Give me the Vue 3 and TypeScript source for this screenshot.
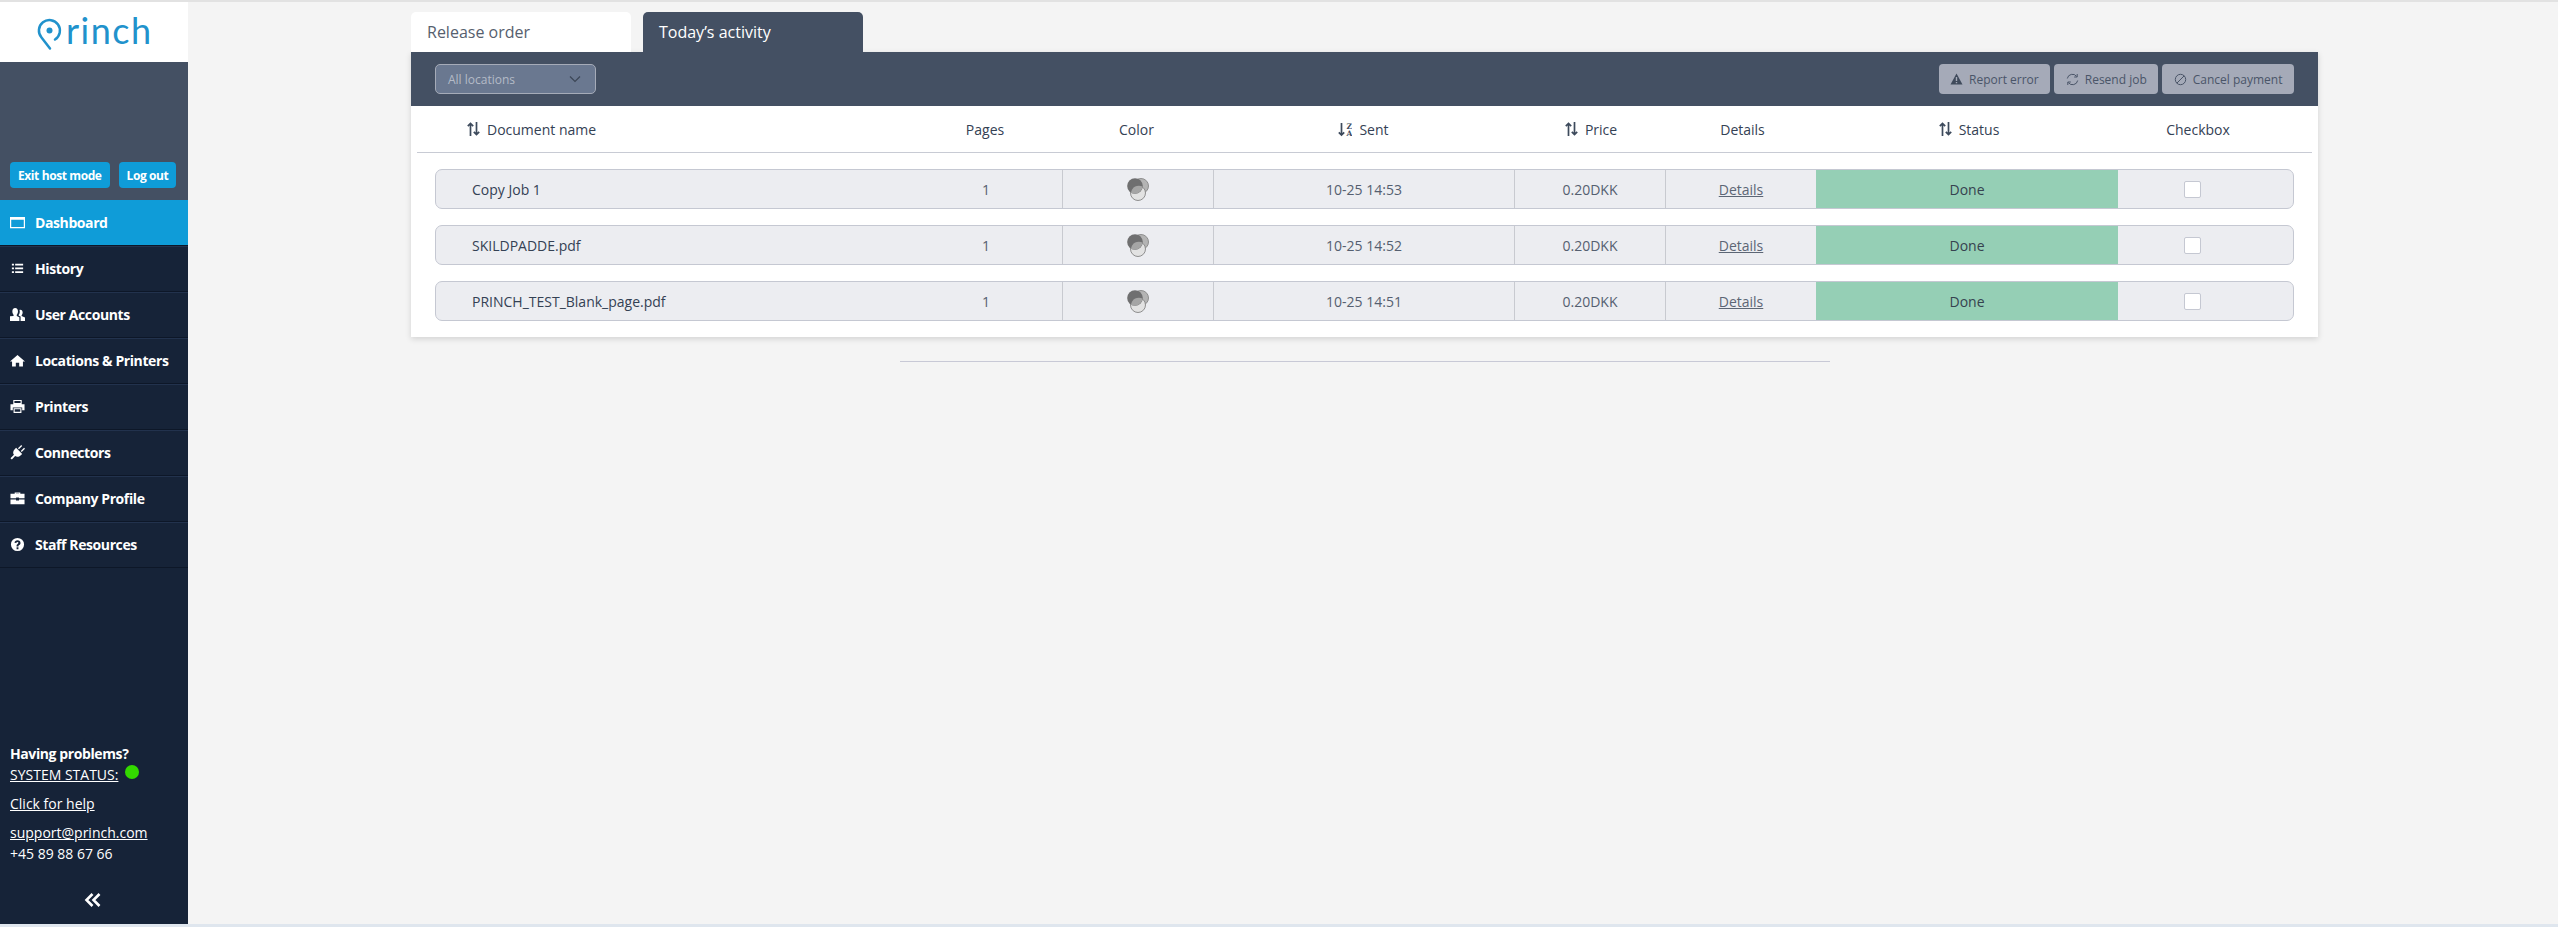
<template>
  <div class="page">
    <aside class="sidebar">
      <div class="logo">
        <svg class="logo-pin" width="26" height="36" viewBox="0 0 26 36">
          <path d="M14 31.500 L5.500 20.500 A10.500 10.500 0 1 1 19 22.500" fill="none" stroke="#2192cc" stroke-width="2.500" stroke-linecap="round" stroke-linejoin="round" />
          <circle cx="13.500" cy="13.500" r="3" fill="#2192cc" />
        </svg>
        <span class="logo-text">rinch</span>
      </div>
      <div class="user-panel">
        <button class="host-btn">Exit host mode</button>
        <button class="host-btn">Log out</button>
      </div>
      <nav class="nav">
        <a v-for="item in navItems" :key="item.label" class="nav-item" :class="{ active: item.active }">
          <svg class="nav-icon" width="15" height="15" viewBox="0 0 16 16" fill="#fff">
            <path :d="item.icon" fill-rule="evenodd" />
          </svg>
          <span>{{ item.label }}</span>
        </a>
      </nav>
      <div class="help">
        <div class="help-title">Having problems?</div>
        <div class="help-status"><a>SYSTEM STATUS:</a><i class="status-dot"></i></div>
        <div class="help-link"><a>Click for help</a></div>
        <div class="help-mail"><a>support@princh.com</a></div>
        <div>+45 89 88 67 66</div>
        <div class="collapse">
          <svg width="18" height="14" viewBox="0 0 18 14" fill="none" stroke="#fff" stroke-width="2.600">
            <path d="M8.500 1 L2.500 7 L8.500 13" />
            <path d="M15.500 1 L9.500 7 L15.500 13" />
          </svg>
        </div>
      </div>
    </aside>

    <main class="main">
      <div class="tabs">
        <div class="tab">Release order</div>
        <div class="tab current">Today’s activity</div>
      </div>
      <section class="card">
        <div class="toolbar">
          <div class="select">
            <span>All locations</span>
            <svg width="12" height="8" viewBox="0 0 12 8" fill="none" stroke="#3c4656" stroke-width="1.200">
              <path d="M1 1.500 L6 6.500 L11 1.500" />
            </svg>
          </div>
          <div class="actions">
            <button class="action">
              <svg width="13" height="12" viewBox="0 0 13 12"><path d="M6.500 0.500 L12.500 11.500 L0.500 11.500 Z M5.800 4 L5.800 8 L7.200 8 L7.200 4 Z M5.800 9 L5.800 10.300 L7.200 10.300 L7.200 9 Z" fill="#3f4a5b" fill-rule="evenodd" /></svg>
              Report error
            </button>
            <button class="action">
              <svg width="13" height="13" viewBox="0 0 13 13" fill="none" stroke="#4a5568" stroke-width="1"><path d="M1.300 5.500 A5.200 5.200 0 0 1 10.600 3.400" /><path d="M11.700 7.500 A5.200 5.200 0 0 1 2.400 9.600" /><path d="M11.200 1 L11.200 4 L8.200 4" /><path d="M1.800 12 L1.800 9 L4.800 9" /></svg>
              Resend job
            </button>
            <button class="action">
              <svg width="13" height="13" viewBox="0 0 13 13" fill="none" stroke="#4a5568" stroke-width="1"><circle cx="6.500" cy="6.500" r="5.200" /><path d="M2.800 10.200 L10.200 2.800" /></svg>
              Cancel payment
            </button>
          </div>
        </div>

        <div class="table-head">
          <div v-for="col in columns" :key="col.label" class="head-cell" :class="col.cls">
            <svg v-if="col.sort === 'both'" class="sort" width="13" height="14" viewBox="0 0 13 14" fill="none" stroke="#3d4a5c" stroke-width="1.700">
              <path d="M3.500 14 L3.500 1.500 M0.800 4.200 L3.500 1.500 L6.200 4.200" />
              <path d="M9.500 0 L9.500 12.500 M6.800 9.800 L9.500 12.500 L12.200 9.800" />
            </svg>
            <svg v-if="col.sort === 'az'" class="sort" width="14" height="15" viewBox="0 0 14 15">
              <path d="M3.500 1 L3.500 13 M0.800 10.300 L3.500 13 L6.200 10.300" fill="none" stroke="#3d4a5c" stroke-width="1.700" />
              <text x="8.500" y="6.500" class="az">Z</text>
              <text x="8.500" y="14" class="az">A</text>
            </svg>
            {{ col.label }}
          </div>
        </div>

        <div class="rows">
          <div v-for="job in jobs" :key="job.name" class="row">
            <div class="cell name">{{ job.name }}</div>
            <div class="cell muted">{{ job.pages }}</div>
            <div class="cell bordered">
              <svg width="22" height="23" viewBox="0 0 22 23">
                <circle cx="14" cy="8" r="7.500" fill="#b4b4b4" stroke="#8e8e8e" />
                <circle cx="11" cy="15" r="7.500" fill="#e2e2e2" stroke="#8e8e8e" />
                <circle cx="8" cy="8" r="7.800" fill="#6f6f70" />
                <path d="M4 14.700 A7.800 7.800 0 0 0 15.500 8.500 A8 8 0 0 0 4 14.700 Z" fill="#a5a5a5" />
              </svg>
            </div>
            <div class="cell bordered muted">{{ job.sent }}</div>
            <div class="cell bordered muted">{{ job.price }}</div>
            <div class="cell bordered"><a class="details">Details</a></div>
            <div class="cell status">{{ job.status }}</div>
            <div class="cell check"><span class="checkbox"></span></div>
          </div>
        </div>
      </section>
      <hr class="rule" />
    </main>
  </div>
</template>

<script setup lang="ts">
interface NavItem {
  label: string
  icon: string
  active?: boolean
}

interface Job {
  name: string
  pages: number
  sent: string
  price: string
  status: string
}

const navItems: NavItem[] = [
  { label: 'Dashboard', active: true, icon: 'M0 2h16v12H0z M1.300 5v7.700h13.400V5z' },
  { label: 'History', icon: 'M2 3h2.200v1.800H2z M5.500 3H14v1.800H5.500z M2 7h2.200v1.800H2z M5.500 7H14v1.800H5.500z M2 11h2.200v1.800H2z M5.500 11H14v1.800H5.500z' },
  { label: 'User Accounts', icon: 'M5.500 1c2 0 3 1.500 3 3.700 0 1.400-.6 2.700-1.300 3.500v1.300l2.800 1.300V15H0v-5.100l3.800-.4V8.200C3.100 7.400 2.500 6.100 2.500 4.700 2.500 2.500 3.500 1 5.500 1z M11 3c1.600 0 2.500 1.300 2.500 2.900 0 1.200-.5 2.200-1.100 2.800v1l3.600 1.600V15h-4.700v-5l-2-.7v-1c.9-1 1.100-2.200 1.100-3.400 0-.7-.1-1.300-.3-1.800.3-.1.600-.1.900-.1z' },
  { label: 'Locations & Printers', icon: 'M8 2 L16 9 L13.800 9 L13.800 14.500 L9.800 14.500 L9.800 10.500 L6.200 10.500 L6.200 14.500 L2.200 14.500 L2.200 9 L0 9 Z' },
  { label: 'Printers', icon: 'M3.500 1h9v4.500h-9z M4.700 2.200v2.100h6.600V2.200z M0.500 5.500h15v6.500h-2.500v-3H3v3H0.500z M3.800 9.800h8.400v5H3.800z M5 11v2.600h6V11z' },
  { label: 'Connectors', icon: 'M8.500 3.500 L12 0 L13 1 L9.500 4.500 Z M11.500 6.500 L15 3 L16 4 L12.500 7.500 Z M6.500 3 L13 9.500 L11.500 11 C9.500 13 7 13 5.500 11.800 L2 15.500 L0.500 14 L4.200 10.500 C3 9 3 6.500 5 4.500 Z' },
  { label: 'Company Profile', icon: 'M5 3V1.500h6V3h4.500v4.800H9.500V7H6.500v.8H.5V3z M6.300 2.700V3h3.400V2.700z M.5 9h5.900v1.200h3.200V9h5.900v5H.5z' },
  { label: 'Staff Resources', icon: 'M8 1a7 7 0 1 1 0 14A7 7 0 0 1 8 1z M7 11v2h2v-2z M8 3.500c-1.800 0-3 1-3.200 2.700l1.900.3c.1-.8.500-1.200 1.200-1.200.7 0 1.100.3 1.100.9 0 .5-.3.800-.9 1.200C7.300 8 7 8.500 7 9.500V10h2v-.3c0-.5.200-.7.800-1.200.9-.6 1.400-1.200 1.400-2.200 0-1.700-1.300-2.800-3.200-2.800z' }
]

const columns = [
  { label: 'Document name', sort: 'both', cls: 'left' },
  { label: 'Pages' },
  { label: 'Color' },
  { label: 'Sent', sort: 'az' },
  { label: 'Price', sort: 'both' },
  { label: 'Details' },
  { label: 'Status', sort: 'both' },
  { label: 'Checkbox', cls: 'check' }
]

const jobs: Job[] = [
  { name: 'Copy Job 1', pages: 1, sent: '10-25 14:53', price: '0.20DKK', status: 'Done' },
  { name: 'SKILDPADDE.pdf', pages: 1, sent: '10-25 14:52', price: '0.20DKK', status: 'Done' },
  { name: 'PRINCH_TEST_Blank_page.pdf', pages: 1, sent: '10-25 14:51', price: '0.20DKK', status: 'Done' }
]
</script>

<style>
html,
body {
  margin: 0;
  background: #f4f4f4;
}
</style>

<style scoped>
.page {
  display: flex;
  box-sizing: border-box;
  height: 927px;
  overflow: hidden;
  border-top: 2px solid #e2e2e2;
  border-bottom: 3px solid #dfe6ee;
  background: #f4f4f4;
  font-family: "Open Sans", sans-serif;
}

.sidebar {
  display: flex;
  flex-direction: column;
  flex: none;
  width: 188px;
  background: #162338;
  color: #fff;
}
.logo {
  display: flex;
  align-items: flex-start;
  gap: 4px;
  box-sizing: border-box;
  height: 60px;
  padding: 10px 0 0 36px;
  background: #fff;
}
.logo-pin {
  margin-top: 5px;
}
.logo-text {
  font-family: Lato, sans-serif;
  font-weight: 400;
  font-size: 36px;
  line-height: 36px;
  letter-spacing: 1.500px;
  color: #2192cc;
}
.user-panel {
  display: flex;
  align-items: flex-end;
  gap: 9px;
  box-sizing: border-box;
  height: 138px;
  padding: 0 10px 12px;
  background: #445063;
}
.host-btn {
  height: 26px;
  padding: 0 8px;
  border: 0;
  border-radius: 4px;
  background: #0f9cd8;
  color: #fff;
  font: 700 12px "Open Sans", sans-serif;
  letter-spacing: -0.4px;
}

.nav-item {
  display: flex;
  align-items: center;
  gap: 10px;
  box-sizing: border-box;
  height: 46px;
  padding: 0 0 2px 10px;
  border-top: 1px solid #22324d;
  border-bottom: 1px solid #0d1728;
  font-size: 14px;
  font-weight: 700;
  letter-spacing: -0.4px;
}
.nav-item.active {
  padding-bottom: 0;
  border-top: 0;
  background: #0f9cd8;
}
.nav-icon {
  flex: none;
}

.help {
  margin-top: auto;
  padding: 0 10px 17px;
  font-size: 14px;
  line-height: 20px;
}
.help a {
  text-decoration: underline;
}
.help-title {
  margin-bottom: 1px;
  font-weight: 700;
  letter-spacing: -0.4px;
}
.help-status {
  display: flex;
  align-items: flex-start;
  gap: 7px;
}
.status-dot {
  width: 14px;
  height: 14px;
  border-radius: 50%;
  background: #33d900;
}
.help-link {
  margin-top: 9px;
}
.help-mail {
  margin-top: 9px;
  margin-bottom: 1px;
}
.collapse {
  display: flex;
  justify-content: center;
  margin: 29px 0 0 -2px;
}

.main {
  flex: 1;
  padding: 10px 240px 0 223px;
  min-width: 0;
}
.tabs {
  display: flex;
  gap: 12px;
}
.tab {
  box-sizing: border-box;
  width: 220px;
  height: 40px;
  padding-left: 16px;
  border-radius: 5px 5px 0 0;
  background: #fff;
  color: #56606e;
  font-size: 16px;
  line-height: 40px;
}
.tab.current {
  background: #445063;
  color: #fff;
}

.card {
  background: #fff;
  box-shadow: 0 2px 6px rgba(0, 0, 0, 0.14);
}
.toolbar {
  display: flex;
  justify-content: space-between;
  align-items: center;
  box-sizing: border-box;
  height: 54px;
  padding: 0 24px;
  background: #445063;
}
.select {
  display: flex;
  justify-content: space-between;
  align-items: center;
  box-sizing: border-box;
  width: 161px;
  height: 30px;
  padding: 0 14px 0 12px;
  border: 1px solid #a5abb8;
  border-radius: 5px;
  background: #6a7890;
  color: #b4bbc7;
  font-size: 12px;
}
.actions {
  display: flex;
  gap: 4px;
}
.action {
  display: flex;
  align-items: center;
  gap: 6px;
  height: 30px;
  padding: 0 11.500px;
  border: 0;
  border-radius: 4px;
  background: #a5aab8;
  color: #4a5568;
  font: 12px "Open Sans", sans-serif;
}

.table-head,
.row {
  display: grid;
  grid-template-columns: 474px 152px 151px 301px 151px 151px 302px 1fr;
}
.table-head {
  grid-template-columns: 474px 152px 151px 303px 152px 151px 302px 1fr;
  height: 46px;
  margin: 0 6px;
  padding: 0 18px;
  border-bottom: 1px solid #c8cbd4;
  color: #344154;
  font-size: 14px;
}
.head-cell {
  display: flex;
  justify-content: center;
  align-items: center;
  gap: 7px;
}
.head-cell.left {
  justify-content: flex-start;
  padding-left: 32px;
}
.head-cell.check {
  padding-right: 18px;
}
.az {
  font: 700 7.500px "DejaVu Serif", serif;
  fill: #3d4a5c;
}

.rows {
  display: flex;
  flex-direction: column;
  gap: 16px;
  padding: 16px 24px;
}
.row {
  height: 40px;
  box-sizing: border-box;
  overflow: hidden;
  border: 1px solid #c5c8d2;
  border-radius: 7px;
  background: #ecedf1;
  color: #344154;
  font-size: 14px;
}
.cell {
  display: flex;
  justify-content: center;
  align-items: center;
}
.cell.name {
  justify-content: flex-start;
  padding-left: 36px;
}
.cell.bordered {
  border-left: 1px solid #c8cad0;
}
.cell.muted {
  color: #555f70;
}
.cell.check {
  padding-right: 26px;
}
.details {
  color: #5c6675;
  text-decoration: underline;
}
.cell.status {
  background: #95cfb5;
  color: #36424f;
}
.checkbox {
  box-sizing: border-box;
  width: 17px;
  height: 17px;
  border: 1px solid #c5c8d2;
  border-radius: 2px;
  background: #fff;
}

.rule {
  width: 930px;
  margin: 24px 0 0 489px;
  border: 0;
  border-top: 1px solid #c8c9d6;
}
</style>
